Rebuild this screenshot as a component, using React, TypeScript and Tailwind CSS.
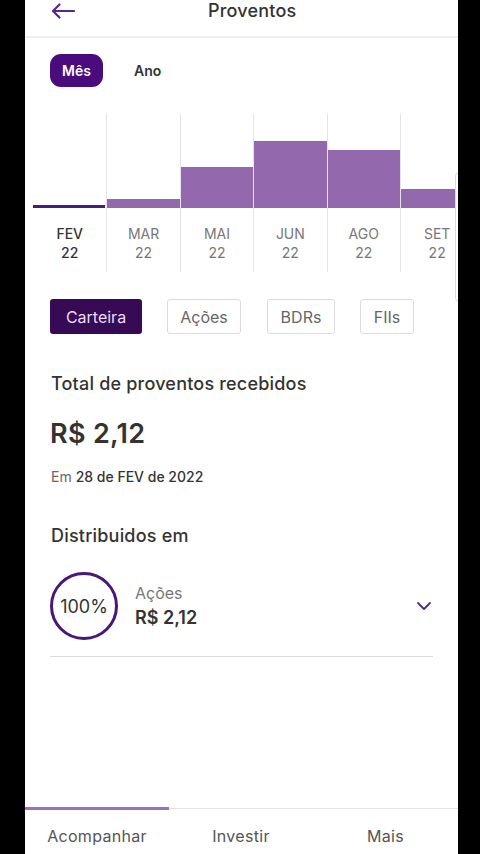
import React from "react";

const months = [
  { m: "FEV", y: "22", h: 0, active: true },
  { m: "MAR", y: "22", h: 9 },
  { m: "MAI", y: "22", h: 41 },
  { m: "JUN", y: "22", h: 67 },
  { m: "AGO", y: "22", h: 58 },
  { m: "SET", y: "22", h: 19 },
];

export default function App() {
  return (
    <div
      className="w-[480px] h-[854px] bg-black flex overflow-hidden"
      style={{ fontFamily: "Inter, 'Noto Sans', sans-serif" }}
    >
      <div className="w-[25px] shrink-0" />
      <div className="w-[433px] shrink-0 bg-white relative flex flex-col overflow-hidden">
        {/* Header */}
        <div className="h-[38px] flex items-center pl-[26px] border-b-2 border-[#efeef1] shrink-0">
          <svg width="24" height="16" viewBox="0 0 24 16" className="shrink-0 -mt-[14px]">
            <path d="M23 8H2M8.5 1.5L2 8l6.5 6.5" fill="none" stroke="#5a2590" strokeWidth="2.2" strokeLinecap="round" strokeLinejoin="round" />
          </svg>
          <div className="ml-[133px] -mt-[14px] text-[18px] font-medium text-[#333] leading-none tracking-[0.2px]">Proventos</div>
        </div>

        {/* Mes/Ano */}
        <div className="flex items-center pl-[25px] pt-[15px] h-[49px] shrink-0">
          <div className="w-[53px] h-[33px] rounded-[11px] bg-[#4a0b7c] text-white text-[14px] font-semibold flex items-center justify-center">
            Mês
          </div>
          <div className="ml-[31px] text-[14px] font-semibold text-[#333]">Ano</div>
        </div>

        {/* Chart */}
        <div className="flex pl-[8px] mt-[27px] h-[158px] shrink-0 overflow-hidden">
          {months.map((c, i) => (
            <div
              key={c.m}
              className={`w-[73.4px] shrink-0 flex flex-col ${i > 0 ? "border-l border-[#e6e3e8]" : ""}`}
            >
              <div className="h-[94px] flex flex-col justify-end">
                {c.active ? (
                  <div className="h-[3px] bg-[#4b1a7c] mr-[1px]" />
                ) : (
                  <div className="bg-[#9468ad]" style={{ height: c.h }} />
                )}
              </div>
              <div className="pt-[16px] flex flex-col items-center text-[14px] leading-[19px]">
                <span className={c.active ? "text-[#333] font-medium" : "text-[#777]"}>{c.m}</span>
                <span className={c.active ? "text-[#333] font-medium" : "text-[#777]"}>{c.y}</span>
              </div>
            </div>
          ))}
        </div>

        {/* scroll hint */}
        <div className="absolute left-[430px] top-[172px] w-[8px] h-[130px] border border-[#dcdadf] rounded-l-[4px] bg-white" />

        {/* Chips */}
        <div className="flex items-center pl-[25px] mt-[27px] gap-[25px] shrink-0">
          <div className="w-[92px] h-[35px] rounded-[3px] bg-[#360a55] text-[#ecdcf6] text-[16px] flex items-center justify-center">
            Carteira
          </div>
          <div className="w-[74px] h-[35px] rounded-[3px] border border-[#dcdcdc] text-[#666] text-[16px] flex items-center justify-center">
            Ações
          </div>
          <div className="w-[68px] h-[35px] rounded-[3px] border border-[#dcdcdc] text-[#666] text-[16px] flex items-center justify-center ml-[1px]">
            BDRs
          </div>
          <div className="w-[54px] h-[35px] rounded-[3px] border border-[#dcdcdc] text-[#666] text-[16px] flex items-center justify-center">
            FIIs
          </div>
        </div>

        {/* Total */}
        <div className="pl-[26px] mt-[38px] text-[18px] font-medium text-[#333] leading-[24px] tracking-[0.2px]">
          Total de proventos recebidos
        </div>
        <div className="pl-[25px] mt-[22px] text-[27px] font-semibold text-[#333] leading-[32px] tracking-[0.3px]">
          R$ 2,12
        </div>
        <div className="pl-[26px] mt-[18px] text-[14px] text-[#666] leading-[18px]">
          Em <span className="font-medium text-[#333]">28 de FEV de 2022</span>
        </div>

        <div className="pl-[26px] mt-[38px] text-[18px] font-medium text-[#333] leading-[24px] tracking-[0.2px]">
          Distribuidos em
        </div>

        <div className="ml-[25px] mr-[25px] mt-[24px] flex items-center pb-[16px] border-b border-[#dedbe0]">
          <div className="w-[68px] h-[68px] rounded-full border-[3px] border-[#4a1677] flex items-center justify-center text-[18px] text-[#333] shrink-0">
            100%
          </div>
          <div className="ml-[17px] flex flex-col flex-1">
            <span className="text-[16px] text-[#777] leading-[22px]">Ações</span>
            <span className="text-[18px] font-semibold text-[#333] leading-[24px] mt-[2px]">R$ 2,12</span>
          </div>
          <svg width="16" height="10" viewBox="0 0 16 10" className="mr-[1px]">
            <path d="M2 2l6 6 6-6" fill="none" stroke="#4e2b7d" strokeWidth="1.8" strokeLinecap="round" strokeLinejoin="round" />
          </svg>
        </div>

        <div className="flex-1" />

        {/* Bottom nav */}
        <div className="h-[46px] shrink-0 relative border-t border-[#e4e2e6] flex items-center pt-[8px]">
          <div className="absolute -top-[2px] left-0 w-[144px] h-[3px] bg-[#9b6fbf]" />
          <div className="w-[144px] text-center text-[16px] text-[#555] tracking-[0.3px]">Acompanhar</div>
          <div className="w-[144px] text-center text-[16px] text-[#555] tracking-[0.3px]">Investir</div>
          <div className="w-[145px] text-center text-[16px] text-[#555] tracking-[0.3px]">Mais</div>
        </div>
      </div>
      <div className="flex-1" />
    </div>
  );
}
